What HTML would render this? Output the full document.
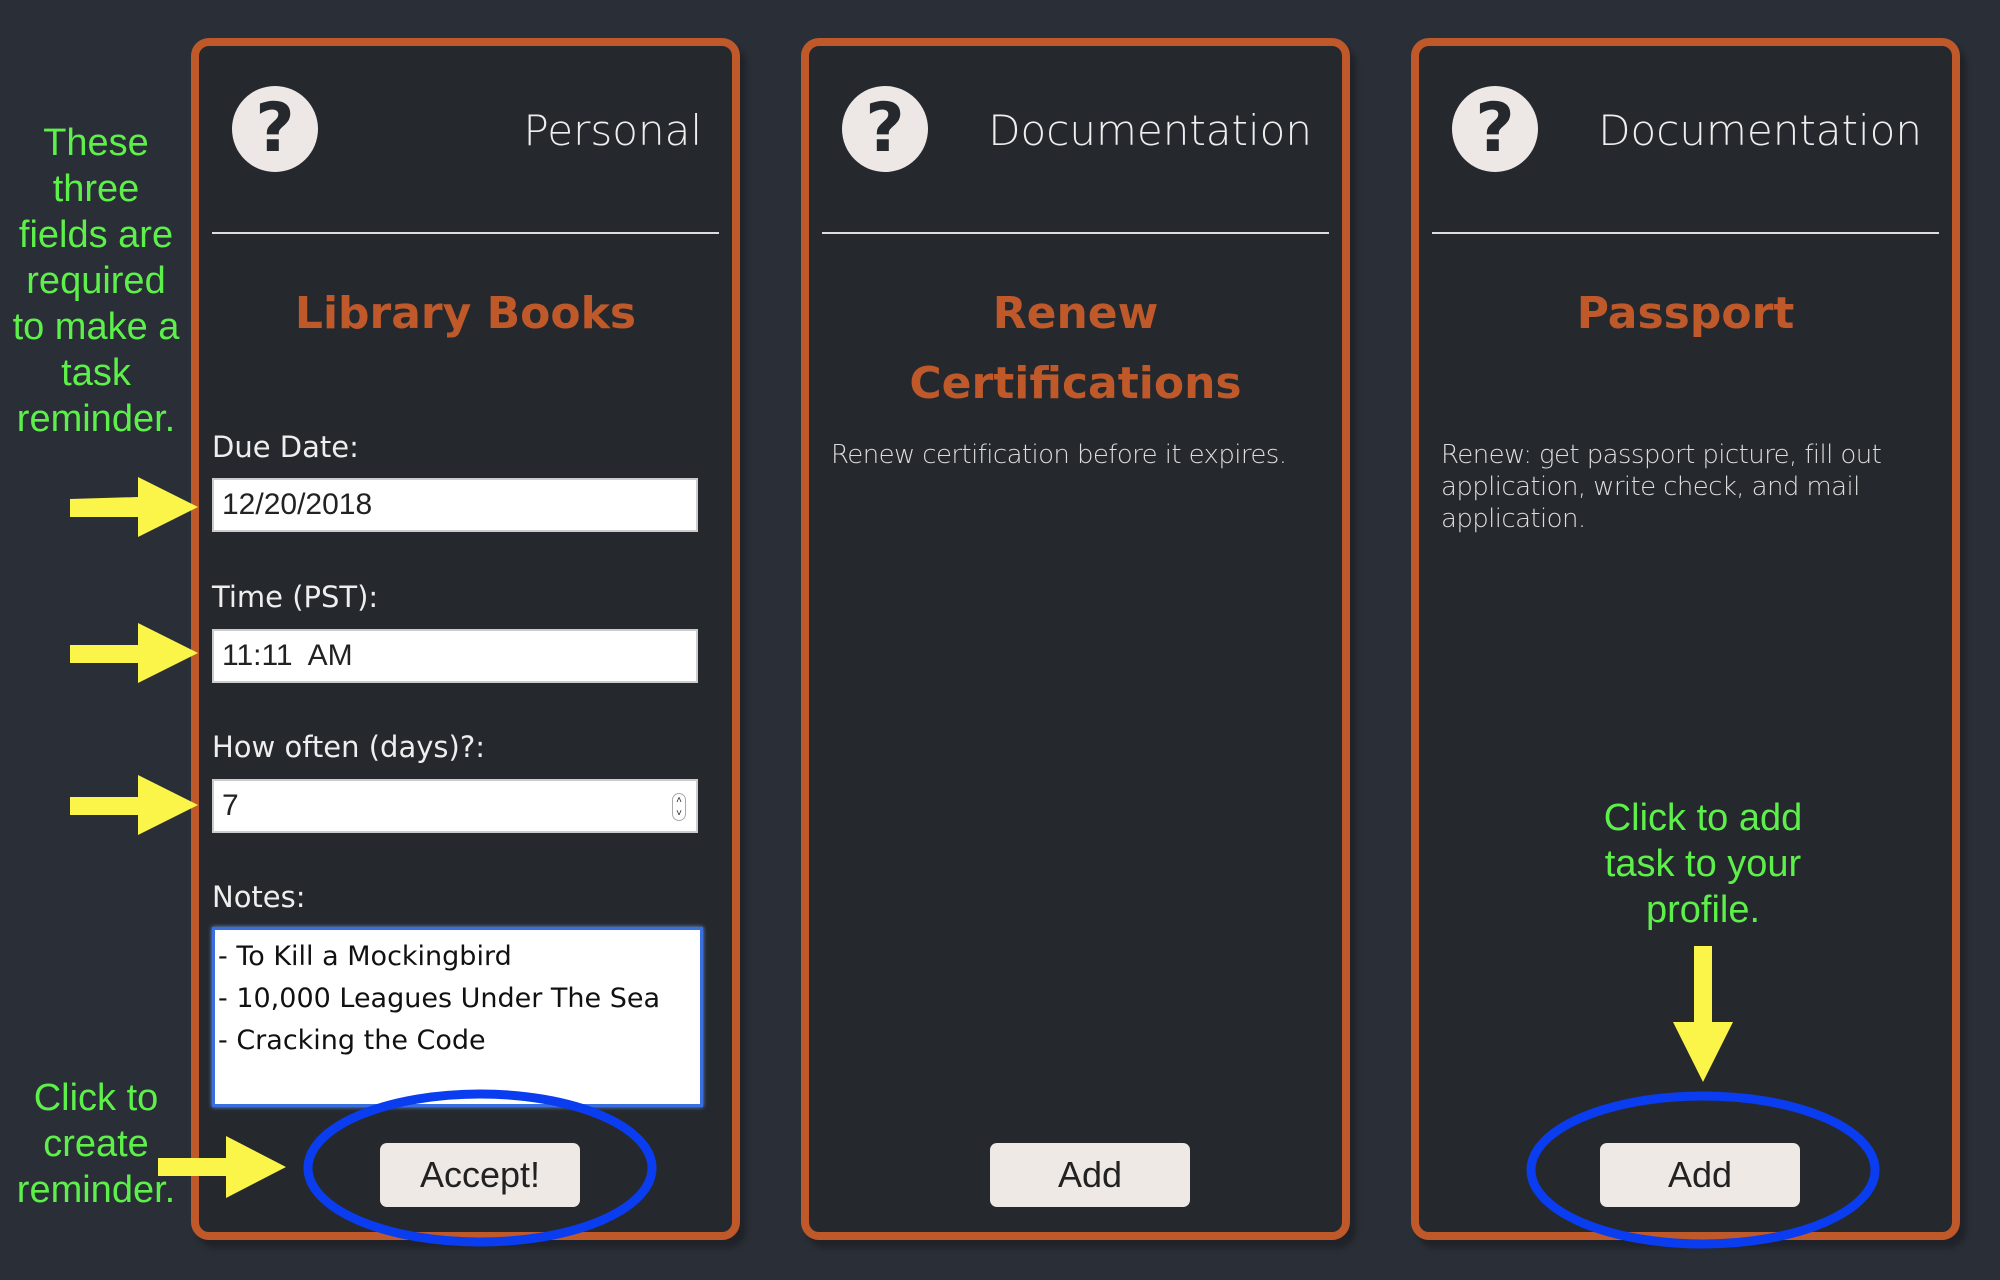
<!DOCTYPE html>
<html><head><meta charset="utf-8"><style>
*{margin:0;padding:0;box-sizing:border-box}
body{width:2000px;height:1280px;background:#2a2e36;position:relative;overflow:hidden;font-family:"Liberation Sans",sans-serif}
.card{position:absolute;top:38px;width:549px;height:1202px;border:8px solid #c0592a;border-radius:18px;background:#25292e;box-shadow:6px 8px 6px rgba(0,0,0,.25)}
.a{position:absolute}
.q{position:absolute;left:33px;top:40px;width:86px;height:86px;border-radius:50%;background:#ede8e5;color:#25292e;font-weight:bold;font-size:68px;line-height:86px;text-align:center;font-family:"DejaVu Sans",sans-serif}
.hd{position:absolute;right:30px;top:60px;color:#eee;font-size:42px;font-family:"DejaVu Sans",sans-serif;font-weight:300}
.hr{position:absolute;left:13px;right:13px;top:186px;height:2px;background:#ddd}
.t{position:absolute;left:0;right:0;top:233px;text-align:center;color:#c0592a;font-weight:bold;font-size:44px;line-height:70px;font-family:"DejaVu Sans",sans-serif}
.d{position:absolute;left:22px;right:14px;top:393px;color:#ddd;font-size:26px;line-height:32px;font-family:"DejaVu Sans",sans-serif;font-weight:300;letter-spacing:-0.6px}
.lb{position:absolute;left:13px;color:#eee;font-size:29px;font-family:"DejaVu Sans",sans-serif}
.in{position:absolute;left:13px;width:486px;height:54px;background:#fff;border:2px solid #ccc;font-size:30px;color:#222;padding-left:8px;line-height:50px}
.btn{position:absolute;top:1097px;width:200px;height:64px;background:#efe9e6;border-radius:7px;text-align:center;line-height:64px;font-size:36px;color:#222}
.g{position:absolute;color:#5ef04a;font-size:38px;line-height:46px;text-align:center}
</style></head><body>

<div class="card" style="left:191px">
 <div class="q">?</div>
 <div class="hd">Personal</div>
 <div class="hr"></div>
 <div class="t">Library Books</div>
 <div class="lb" style="top:384px">Due Date:</div>
 <div class="in" style="top:432px">12/20/2018</div>
 <div class="lb" style="top:534px">Time (PST):</div>
 <div class="in" style="top:583px">11:11&nbsp; AM</div>
 <div class="lb" style="top:684px">How often (days)?:</div>
 <div class="in" style="top:733px">7<span style="position:absolute;right:10px;top:12px;width:14px;height:28px;border:1px solid #aaa;border-radius:7px;font-size:10px;line-height:13px;text-align:center">˄<br>˅</span></div>
 <div class="lb" style="top:834px">Notes:</div>
 <div class="in" style="top:881px;height:180px;width:491px;border:3px solid #3a6fe0;box-shadow:0 0 4px #6a9af0;line-height:42px;padding-top:6px;padding-left:3px;font-family:'DejaVu Sans',sans-serif;font-size:27px;color:#111">- To Kill a Mockingbird<br>- 10,000 Leagues Under The Sea<br>- Cracking the Code</div>
 <div class="btn" style="left:181px">Accept!</div>
</div>

<div class="card" style="left:801px">
 <div class="q">?</div>
 <div class="hd">Documentation</div>
 <div class="hr"></div>
 <div class="t">Renew<br>Certifications</div>
 <div class="d" style="left:22px;right:0;white-space:nowrap">Renew certification before it expires.</div>
 <div class="btn" style="left:181px">Add</div>
</div>

<div class="card" style="left:1411px">
 <div class="q">?</div>
 <div class="hd">Documentation</div>
 <div class="hr"></div>
 <div class="t">Passport</div>
 <div class="d">Renew: get passport picture, fill out<br>application, write check, and mail<br>application.</div>
 <div class="btn" style="left:181px">Add</div>
</div>

<div class="g" style="left:0;width:192px;top:120px">These<br>three<br>fields are<br>required<br>to make a<br>task<br>reminder.</div>
<div class="g" style="left:0;width:192px;top:1075px">Click to<br>create<br>reminder.</div>
<div class="g" style="left:1553px;width:300px;top:795px">Click to add<br>task to your<br>profile.</div>

<svg class="a" style="left:0;top:0" width="2000" height="1280">
 <g fill="#fbf54a">
  <path d="M70 499 L138 497 L138 477 L198 507 L138 537 L138 517 L70 517Z"/>
  <path d="M70 645 L138 645 L138 623 L198 653 L138 683 L138 663 L70 663Z"/>
  <path d="M70 797 L138 797 L138 775 L198 805 L138 835 L138 815 L70 815Z"/>
  <path d="M158 1158 L226 1158 L226 1136 L286 1167 L226 1198 L226 1176 L158 1176Z"/>
  <path d="M1694 946 L1712 946 L1712 1022 L1733 1022 L1703 1082 L1673 1022 L1694 1022Z"/>
 </g>
 <g fill="none" stroke="#0a3cf0" stroke-width="9">
  <ellipse cx="480" cy="1168" rx="172" ry="74"/>
  <ellipse cx="1703" cy="1170" rx="172" ry="74"/>
 </g>
</svg>
</body></html>
